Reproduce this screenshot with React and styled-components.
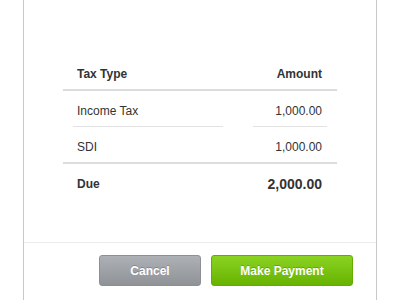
import styled, { createGlobalStyle } from 'styled-components'

const GlobalStyle = createGlobalStyle`
    html, body {
        margin: 0;
        padding: 0;
        background: #ffffff;
    }

    body {
        font-family: "Liberation Sans", Arial, sans-serif;
        color: #333333;
    }
`

const StyledPanel = styled.div`
    display: flex;
    flex-direction: column;
    min-height: 100vh;
    box-sizing: border-box;
    margin: 0 23px;
    border-left: 1px solid #c9c9c9;
    border-right: 1px solid #c9c9c9;
    background: #ffffff;
`

const StyledBody = styled.div`
    padding: 59px 39px 51px;
`

const StyledRow = styled.div`
    display: grid;
    grid-template-columns: 175px 1fr;
    align-items: end;
    border-bottom: ${props => props.$rule ? '2px solid #dcdcdc' : 'none'};
`

const StyledCell = styled.div`
    margin: ${props => props.$right ? '0 10px 0 15px' : '0 15px 0 10px'};
    padding: ${props => props.$pad};
    padding-left: ${props => props.$right ? '0' : '4px'};
    padding-right: ${props => props.$right ? '5px' : '0'};
    text-align: ${props => props.$right ? 'right' : 'left'};
    font-size: ${props => props.$big ? '14px' : '12px'};
    font-weight: ${props => props.$bold ? 700 : 400};
    line-height: 14px;
    border-bottom: ${props => props.$divided ? '1px solid #e2e2e2' : 'none'};
`

const StyledFooter = styled.div`
    display: flex;
    justify-content: flex-end;
    gap: 10px;
    margin-top: auto;
    padding: 12px 23px 0;
    flex: 1;
    align-items: flex-start;
    border-top: 1px solid #ececec;
`

const StyledButton = styled.button`
    width: ${props => props.$width}px;
    height: 31px;
    box-sizing: border-box;
    border-radius: 3px;
    border: 1px solid ${props => props.$primary ? '#62ad00' : '#8c9094'};
    background: ${props => props.$primary
        ? 'linear-gradient(to bottom, #8bd323, #67b300)'
        : 'linear-gradient(to bottom, #adb0b4, #8f9397)'};
    color: #ffffff;
    font-family: "Liberation Sans", Arial, sans-serif;
    font-size: 12px;
    font-weight: 700;
    text-shadow: 0 -1px 0 rgba(0, 0, 0, 0.2);
    cursor: pointer;
    padding: 0;
`

const rows = [
    { type: 'Income Tax', amount: '1,000.00', divided: true },
    { type: 'SDI', amount: '1,000.00', rule: true },
]

const App = () => (
    <>
        <GlobalStyle />
        <StyledPanel>
            <StyledBody>
                <StyledRow $rule>
                    <StyledCell $pad="8px 0" $bold>Tax Type</StyledCell>
                    <StyledCell $pad="8px 0" $bold $right>Amount</StyledCell>
                </StyledRow>
                {rows.map((row, index) => (
                    <StyledRow key={index} $rule={row.rule}>
                        <StyledCell $pad="13px 0 8px" $divided={row.divided}>{row.type}</StyledCell>
                        <StyledCell $pad="13px 0 8px" $divided={row.divided} $right>{row.amount}</StyledCell>
                    </StyledRow>
                ))}
                <StyledRow>
                    <StyledCell $pad="13px 0 0" $bold>Due</StyledCell>
                    <StyledCell $pad="13px 0 0" $bold $big $right>2,000.00</StyledCell>
                </StyledRow>
            </StyledBody>
            <StyledFooter>
                <StyledButton $width={102}>Cancel</StyledButton>
                <StyledButton $width={142} $primary>Make Payment</StyledButton>
            </StyledFooter>
        </StyledPanel>
    </>
)

export default App
